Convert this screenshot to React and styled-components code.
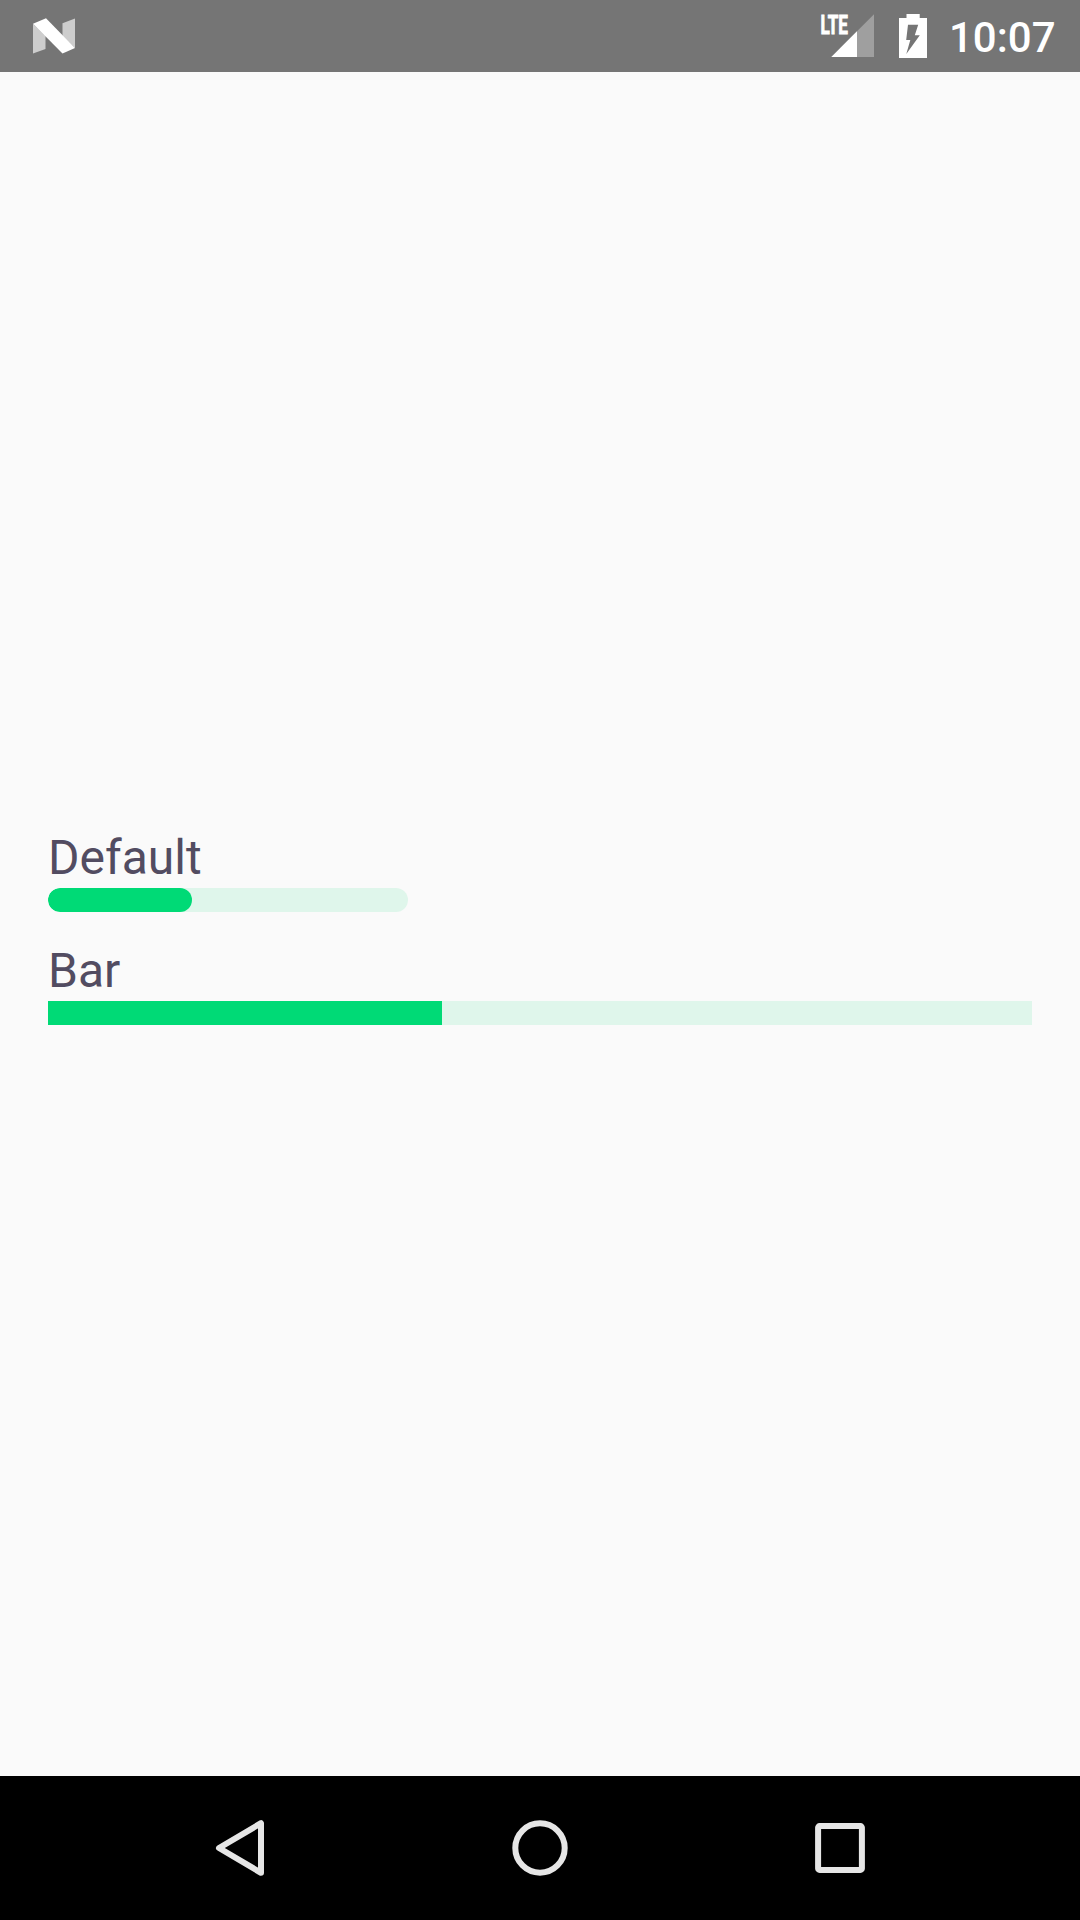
import React from "react";
import styled, { createGlobalStyle } from "styled-components";

const GlobalStyle = createGlobalStyle`
  * { box-sizing: border-box; }
  body { margin: 0; background: #fafafa; }
`;

const Screen = styled.div`
  width: 1080px;
  height: 1920px;
  display: flex;
  flex-direction: column;
  background: #fafafa;
  font-family: Roboto, "Noto Sans", sans-serif;
`;

const StatusBar = styled.header`
  height: 72px;
  flex: none;
  display: flex;
  align-items: center;
  justify-content: space-between;
  padding: 0 24px 0 30px;
  background: #757575;
`;

const StatusIcons = styled.div`
  display: flex;
  align-items: center;
`;

const Glyph = styled.svg`
  display: block;
  flex: none;
  width: ${(p) => p.$width}px;
  height: 72px;
`;

const Clock = styled.time`
  width: 107px;
  height: 72px;
  margin-left: 17px;
  color: #fff;
  font-size: 42px;
  font-weight: 500;
  line-height: 76px;
  white-space: nowrap;
`;

const Content = styled.main`
  flex: 1;
  display: flex;
  flex-direction: column;
  justify-content: center;
  gap: 24px;
  padding: 0 48px;
`;

const Field = styled.section`
  display: flex;
  flex-direction: column;
`;

const Label = styled.span`
  height: 65px;
  padding-top: 4px;
  color: #524c61;
  font-size: 48px;
  line-height: 62px;
`;

const Track = styled.div`
  width: ${(p) => (p.$full ? "100%" : "360px")};
  height: 24px;
  border-radius: ${(p) => (p.$rounded ? "12px" : "0")};
  background: #dff6eb;
  overflow: hidden;
`;

const Fill = styled.div`
  height: 100%;
  border-radius: inherit;
  background: #00da76;
`;

const NavBar = styled.nav`
  height: 144px;
  flex: none;
  display: grid;
  grid-template-columns: repeat(3, 300px);
  justify-content: center;
  background: #000;
`;

const NavButton = styled.button`
  display: flex;
  align-items: center;
  justify-content: center;
  padding: 0;
  border: 0;
  background: none;
`;

const NavIcon = styled.svg`
  width: 72px;
  height: 72px;
  fill: none;
  stroke: #e6e6e6;
  stroke-width: 6;
  stroke-linejoin: round;
`;

function Progress({ label, value, full, rounded }) {
  return (
    <Field>
      <Label>{label}</Label>
      <Track
        $full={full}
        $rounded={rounded}
        role="progressbar"
        aria-label={label}
        aria-valuenow={value}
      >
        <Fill style={{ width: `${value}%` }} />
      </Track>
    </Field>
  );
}

export default function App() {
  return (
    <Screen>
      <GlobalStyle />
      <StatusBar>
        <Glyph $width={48} viewBox="30 0 48 72">
          <path d="M33 23.7 45.5 36V49L33 53.5Z" fill="#cdcdcd" />
          <path d="M62.5 23.2 75 18.4V48L62.5 36Z" fill="#cdcdcd" />
          <path d="M33 23.7 46 18.3 75 48 62.5 53.5Z" fill="#fff" />
        </Glyph>
        <StatusIcons>
          <Glyph $width={60} viewBox="818 0 60 72">
            <text
              x="820.4"
              y="33.5"
              fill="#fff"
              stroke="#fff"
              strokeWidth="0.9"
              fontSize="25.5"
              fontWeight="700"
              textLength="27.6"
              lengthAdjust="spacingAndGlyphs"
            >
              LTE
            </text>
            <path d="M831.3 57 874 14.3V57Z" fill="#9f9f9f" />
            <path d="M831.3 57 857 31.3V57Z" fill="#fff" />
          </Glyph>
          <Glyph $width={54} viewBox="878 0 54 72">
            <path d="M906.5 14H919.7V18H927V58H899V18H906.5Z" fill="#fff" />
            <path
              d="M908 24.8H918.2L914.8 35.2H919.8L906.3 54 910.3 40H906.2Z"
              fill="#757575"
            />
          </Glyph>
          <Clock>10:07</Clock>
        </StatusIcons>
      </StatusBar>
      <Content>
        <Progress label="Default" value={40} rounded />
        <Progress label="Bar" value={40} full />
      </Content>
      <NavBar>
        <NavButton aria-label="Back">
          <NavIcon viewBox="0 0 72 72">
            <path d="M15 36 57 11.2V60.8Z" />
          </NavIcon>
        </NavButton>
        <NavButton aria-label="Home">
          <NavIcon viewBox="0 0 72 72">
            <circle cx="36" cy="36" r="24.7" />
          </NavIcon>
        </NavButton>
        <NavButton aria-label="Recent apps">
          <NavIcon viewBox="0 0 72 72">
            <rect x="14.1" y="14.1" width="43.8" height="43.8" rx="1.5" />
          </NavIcon>
        </NavButton>
      </NavBar>
    </Screen>
  );
}
